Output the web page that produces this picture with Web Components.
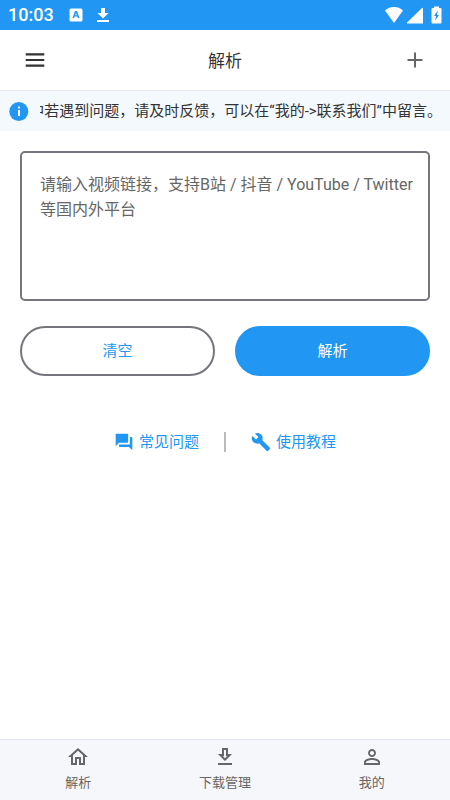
<!DOCTYPE html>
<html lang="zh-CN">
<head>
<meta charset="utf-8">
<meta name="viewport" content="width=device-width, initial-scale=1">
<title>解析</title>
<style>
  html, body { height: 100%; }
  body {
    margin: 0;
    background: #fff;
    color: #333;
    font-family: Roboto, "Noto Sans CJK SC", sans-serif;
    --primary: #2196f3;
    --outline: #77747d;
  }
</style>
</head>
<body>
<parse-app></parse-app>
<script>
const define = (name, html, setup) => {
  const template = document.createElement('template');
  template.innerHTML = '<style>*{box-sizing:border-box}button{font:inherit;color:inherit;border:0;background:none;padding:0;margin:0;cursor:pointer}svg{display:block;fill:currentColor;flex:none}</style>' + html;
  customElements.define(name, class extends HTMLElement {
    constructor() {
      super();
      this.attachShadow({ mode: 'open' }).append(template.content.cloneNode(true));
    }
    connectedCallback() { if (setup) setup(this, this.shadowRoot); }
  });
};

define('status-bar', `
  <style>
    :host { display: flex; align-items: center; height: 30px; padding: 0 8px; background: var(--primary); color: #fff; }
    .time { font-size: 18px; line-height: 30px; font-weight: 500; margin-right: 15px; }
    .left, .right { display: flex; align-items: center; }
    .left { gap: 13px; }
    .right { margin-left: auto; gap: 4px; }
    .battery { margin-left: 4px; }
  </style>
  <span class="time">10:03</span>
  <div class="left">
    <svg width="14" height="14" viewBox="0 0 14 14"><path fill-rule="evenodd" d="M2 .5h10A1.500 1.500 0 0 1 13.500 2v10a1.500 1.500 0 0 1-1.500 1.500H2A1.500 1.500 0 0 1 .5 12V2A1.500 1.500 0 0 1 2 .5zM6 3 3.500 10h1.700l.4-1.400h2.700l.5 1.400h1.700L8 3zM7 5l.8 2.300H6.200z"/></svg>
    <svg width="14" height="16" viewBox="0 0 14 16"><path d="M5 1h4v5h3.500L7 11.500 1.500 6H5zM1 13h12v2H1z"/></svg>
  </div>
  <div class="right">
    <svg width="18" height="18" viewBox="0 0 18 18"><path d="M9 17 0 4.500C2.500 2 5.500 1 9 1s6.500 1 9 3.500z"/></svg>
    <svg width="16" height="18" viewBox="0 0 16 18"><path d="M0 17.500V16.500L15 2q1-.8 1 .5v15z"/></svg>
    <svg class="battery" width="11" height="18" viewBox="0 0 11 18"><path fill-rule="evenodd" d="M3 .5h5V2h1.500Q10.500 2 10.500 3v13.500q0 1-1 1h-8q-1 0-1-1V3q0-1 1-1H3zM6.800 4.500 3 10h2l-.8 4.500L8 9H6z"/></svg>
  </div>`);

define('app-header', `
  <style>
    :host { display: block; border-bottom: 1px solid #ebe6eb; }
    header { display: grid; grid-template-columns: 1fr auto 1fr; align-items: center; height: 60px; padding: 0 25px; }
    h1 { margin: 0; padding-top: 2px; font-size: 17px; line-height: 24px; font-weight: 400; color: #333; }
    .add { justify-self: end; color: #666; }
    .menu { justify-self: start; color: #333; }
  </style>
  <header>
    <button class="menu" aria-label="菜单"><svg width="20" height="20" viewBox="0 0 20 20"><path d="M.7 3.300h18.600v2.200H.7zM.7 8.900h18.600v2.200H.7zM.7 14.500h18.600v2.200H.7z"/></svg></button>
    <h1><slot></slot></h1>
    <button class="add" aria-label="添加"><svg width="20" height="20" viewBox="0 0 20 20"><path d="M9 2.500h2V9h6.500v2H11v6.500H9V11H2.500V9H9z"/></svg></button>
  </header>`);

define('notice-bar', `
  <style>
    :host { display: flex; align-items: center; height: 40px; padding: 0 8px; gap: 11px; background: #f4f9fe; }
    svg { color: var(--primary); }
    .track { flex: 1; min-width: 0; overflow: hidden; display: flex; justify-content: flex-end; }
    span { flex: none; white-space: nowrap; font-size: 15px; line-height: 24px; }
  </style>
  <svg width="21" height="20" viewBox="0 0 21 20" role="img" aria-label="提示"><circle cx="10.800" cy="10.500" r="9.500"/><path fill="#fff" d="M10 9h2v6h-2zM10 5.500h2v2h-2z"/></svg>
  <div class="track"><span><slot></slot></span></div>`);

define('link-input', `
  <style>
    :host { display: block; }
    textarea { display: block; width: 100%; height: 150px; resize: none; padding: 19px 10px 19px 18px; border: 2px solid var(--outline); border-radius: 5px; background: #fff; color: #333; font: 16px/25px Roboto, "Noto Sans CJK SC", sans-serif; outline-color: var(--primary); }
    textarea::placeholder { color: #666; opacity: 1; }
  </style>
  <textarea></textarea>`, (host, root) => {
    const area = root.querySelector('textarea');
    area.placeholder = host.getAttribute('placeholder');
    area.setAttribute('aria-label', host.getAttribute('label'));
  });

define('pill-button', `
  <style>
    :host { display: block; flex: 1; }
    button { display: block; width: 100%; height: 50px; border: 2px solid var(--outline); border-radius: 25px; color: var(--primary); font-size: 15px; line-height: 22px; }
    :host([filled]) button { background: var(--primary); border-color: var(--primary); color: #fff; }
  </style>
  <button><slot></slot></button>`);

define('help-link', `
  <style>
    :host { display: block; }
    a { display: flex; align-items: center; gap: 5px; color: var(--primary); text-decoration: none; font-size: 15px; line-height: 22px; }
    span { padding-top: 1px; }
  </style>
  <a href="#"><slot name="icon"></slot><span><slot></slot></span></a>`);

define('tab-item', `
  <style>
    :host { display: block; flex: 1; }
    button { display: flex; flex-direction: column; align-items: center; gap: 4px; width: 100%; height: 60px; padding-top: 5px; justify-content: flex-start; color: #666; font-size: 13px; line-height: 20px; }
  </style>
  <button><slot name="icon"></slot><span><slot></slot></span></button>`);

define('tab-bar', `
  <style>
    :host { display: block; border-top: 1px solid #e4e4ec; background: #f6f7fb; }
    nav { display: flex; padding: 0 5px; }
  </style>
  <nav><slot></slot></nav>`);

define('parse-app', `
  <style>
    :host { display: flex; flex-direction: column; min-height: 100%; }
    main { flex: 1; display: flex; flex-direction: column; gap: 25px; padding: 20px; }
    .actions { display: flex; gap: 20px; }
    .help { display: flex; justify-content: center; align-items: center; gap: 25px; margin-top: 29px; }
    .divider { width: 2px; height: 20px; background: #bbb; }
  </style>
  <status-bar></status-bar>
  <app-header>解析</app-header>
  <notice-bar>使用中若遇到问题，请及时反馈，可以在“我的-&gt;联系我们”中留言。</notice-bar>
  <main>
    <link-input label="视频链接" placeholder="请输入视频链接，支持B站 / 抖音 / YouTube / Twitter等国内外平台"></link-input>
    <div class="actions">
      <pill-button>清空</pill-button>
      <pill-button filled>解析</pill-button>
    </div>
    <div class="help">
      <help-link><svg slot="icon" width="20" height="20" viewBox="0 0 24 24"><path d="M21 6h-2v9H6v2c0 .55.45 1 1 1h11l4 4V7c0-.55-.45-1-1-1zm-4 6V3c0-.55-.45-1-1-1H3c-.55 0-1 .45-1 1v14l4-4h10c.55 0 1-.45 1-1z"/></svg>常见问题</help-link>
      <div class="divider"></div>
      <help-link><svg slot="icon" width="20" height="20" viewBox="0 0 24 24"><path d="M22.700 19l-9.100-9.100c.9-2.300.4-5-1.500-6.900-2-2-5-2.400-7.400-1.300L9 6 6 9 1.600 4.700C.4 7.100.9 10.100 2.900 12.100c1.900 1.900 4.600 2.400 6.900 1.500l9.100 9.100c.4.4 1 .4 1.400 0l2.300-2.300c.5-.4.5-1.100.1-1.400z"/></svg>使用教程</help-link>
    </div>
  </main>
  <tab-bar>
    <tab-item><svg slot="icon" width="24" height="24" viewBox="0 0 24 24"><path d="M12 5.690l5 4.500V18h-2v-6H9v6H7v-7.810l5-4.500M12 3L2 12h3v8h6v-6h2v6h6v-8h3L12 3z"/></svg>解析</tab-item>
    <tab-item><svg slot="icon" width="24" height="24" viewBox="0 0 24 24"><path d="M19 9h-4V3H9v6H5l7 7 7-7zm-8 2V5h2v6h1.170L12 13.170 9.830 11H11zM5 18h14v2H5z"/></svg>下载管理</tab-item>
    <tab-item><svg slot="icon" width="24" height="24" viewBox="0 0 24 24"><path d="M12 5.900c1.160 0 2.100.94 2.100 2.100s-.94 2.100-2.100 2.100S9.900 9.160 9.900 8s.94-2.100 2.100-2.100m0 9c2.970 0 6.100 1.460 6.100 2.100v1.100H5.900V17c0-.64 3.130-2.100 6.100-2.100M12 4C9.790 4 8 5.790 8 8s1.790 4 4 4 4-1.790 4-4-1.790-4-4-4zm0 9c-2.670 0-8 1.340-8 4v3h16v-3c0-2.660-5.330-4-8-4z"/></svg>我的</tab-item>
  </tab-bar>`);
</script>
</body>
</html>
